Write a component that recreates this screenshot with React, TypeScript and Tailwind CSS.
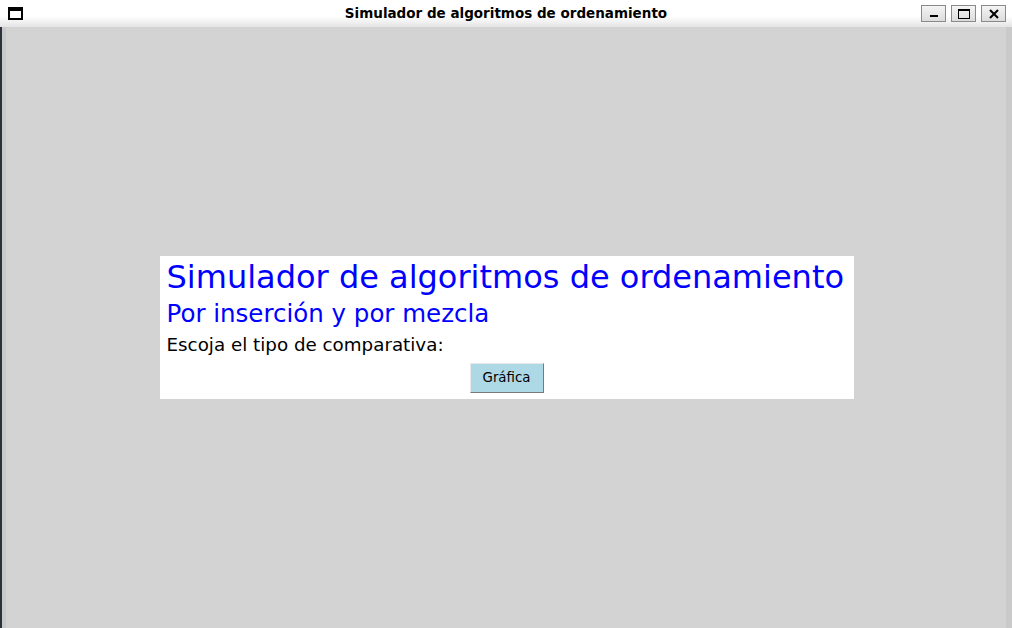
export default function App() {
  return (
    <div className="flex h-[628px] w-[1012px] flex-col overflow-hidden bg-[#d3d3d3] font-['DejaVu_Sans',sans-serif]">
      {/* Title bar */}
      <div className="relative flex h-[27px] shrink-0 items-center justify-between bg-gradient-to-b from-white from-60% to-[#e4e4e4]">
        <div className="ml-[8px] h-[13px] w-[15px] border-2 border-t-[4px] border-black bg-white" />
        <div className="absolute inset-x-0 top-[5px] text-center text-[13.5px] font-bold leading-[17px] text-black">
          Simulador de algoritmos de ordenamiento
        </div>
        <div className="relative mr-[6px] flex gap-[5px]">
          <button className="flex h-[17px] w-[25px] items-end justify-center border border-[#8a8a8a] bg-gradient-to-b from-[#f4f4f4] to-[#dcdcdc] pb-[4px]">
            <span className="h-[2px] w-[8px] bg-black" />
          </button>
          <button className="flex h-[17px] w-[25px] items-center justify-center border border-[#8a8a8a] bg-gradient-to-b from-[#f4f4f4] to-[#dcdcdc]">
            <span className="h-[10px] w-[12px] border border-t-2 border-black" />
          </button>
          <button className="flex h-[17px] w-[25px] items-center justify-center border border-[#8a8a8a] bg-gradient-to-b from-[#f4f4f4] to-[#dcdcdc]">
            <svg width="10" height="10" viewBox="0 0 10 10">
              <path d="M1 1L9 9M9 1L1 9" stroke="black" strokeWidth="2" />
            </svg>
          </button>
        </div>
      </div>

      {/* Body */}
      <div className="flex flex-1">
        <div className="w-[2px] bg-[#2b303b]" />
        <div className="w-[4px] bg-[#c9c9c9]" />
        <div className="flex flex-1 items-center justify-center pl-[1px]">
          <div className="flex w-[694px] flex-col bg-white px-[7px] pb-[6px]">
            <div className="text-[32px] leading-[42px] text-[#0000ff]">Simulador de algoritmos de ordenamiento</div>
            <div className="text-[24.5px] leading-[32px] text-[#0000ff]">Por inserción y por mezcla</div>
            <div className="text-[18.3px] leading-[29px] text-black">Escoja el tipo de comparativa:</div>
            <div className="mt-[4px] flex justify-center">
              <button className="h-[30px] w-[74px] border border-[#e8e8e8] border-b-[#7a7a7a] border-r-[#7a7a7a] bg-[#add8e6] text-[13.33px] text-black">
                Gráfica
              </button>
            </div>
          </div>
        </div>
        <div className="w-[6px] bg-[#cacaca]" />
      </div>
    </div>
  )
}
